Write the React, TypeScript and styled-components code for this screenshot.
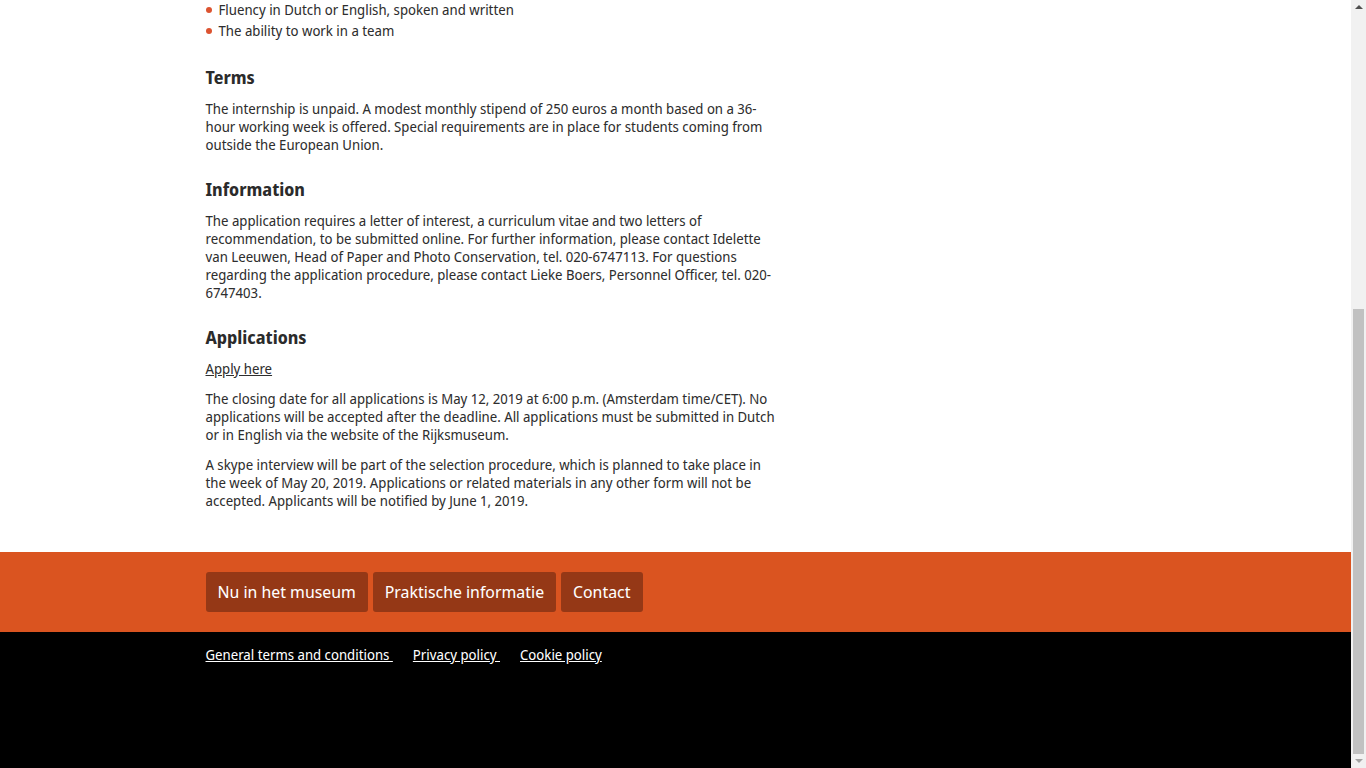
import React from "react";
import styled, { createGlobalStyle } from "styled-components";

const Global = createGlobalStyle`
  html, body { margin: 0; padding: 0; height: 100%; overflow: hidden; }
  body { font-family: "Noto Sans Display", "Noto Sans", sans-serif; color: #2e2e2e; background: #fff; }
  * { box-sizing: border-box; }
`;

const Frame = styled.div`
  display: flex;
  height: 768px;
  width: 1366px;
`;

const Page = styled.div`
  flex: 1;
  display: flex;
  flex-direction: column;
  min-width: 0;
`;

const Container = styled.div`
  width: 940px;
  margin: 0 auto;
`;

const Main = styled.main`
  background: #fff;
  padding-bottom: 30px;
`;

const Column = styled.div`
  width: 575px;
  font-size: 14px;
  line-height: 18px;
`;

const List = styled.ul`
  list-style: none;
  margin: 0;
  padding: 0 0 1px;
`;

const Item = styled.li`
  position: relative;
  padding-left: 13px;
  line-height: 20px;
  & + & {
    margin-top: 1px;
  }
  &::before {
    content: "";
    position: absolute;
    left: 0;
    top: 7px;
    width: 6px;
    height: 6px;
    border-radius: 50%;
    background: #dc5330;
  }
`;

const Heading = styled.h2`
  font-size: 17px;
  font-weight: 700;
  line-height: 24px;
  margin: 24px 0 10px;
  color: #2b2b2b;
`;

const Para = styled.p`
  margin: 0 0 12px;
`;

const TextLink = styled.a`
  color: #2e2e2e;
  text-decoration: underline;
`;

const NavBand = styled.nav`
  background: #da5420;
  padding: 20px 0;
`;

const NavRow = styled.div`
  display: flex;
  gap: 5px;
`;

const NavButton = styled.a`
  display: block;
  background: #953816;
  color: #fff;
  font-size: 16.8px;
  line-height: 40px;
  height: 40px;
  padding: 0 12px;
  border-radius: 3px;
  text-decoration: none;
`;

const Bottom = styled.footer`
  flex: 1;
  background: #000;
  padding-top: 14px;
`;

const LegalRow = styled.div`
  display: flex;
  gap: 20px;
  font-size: 14px;
  line-height: 18px;
`;

const LegalLink = styled.a`
  color: #fff;
  text-decoration: underline;
  white-space: pre;
`;

const Scrollbar = styled.div`
  width: 15px;
  background: #f1f1f1;
  display: flex;
  flex-direction: column;
  align-items: center;
`;

const Arrow = styled.div<{ $down?: boolean }>`
  width: 0;
  height: 0;
  margin: 5px 0;
  border-left: 4px solid transparent;
  border-right: 4px solid transparent;
  ${(p) =>
    p.$down
      ? "border-top: 4px solid #a3a3a3;"
      : "border-bottom: 4px solid #505050;"}
`;

const Track = styled.div`
  flex: 1;
  width: 100%;
  display: flex;
  flex-direction: column;
  justify-content: flex-end;
  padding: 0 2px;
`;

const Thumb = styled.div`
  height: 445px;
  background: #c1c1c1;
`;

export default function App() {
  return (
    <>
      <Global />
      <Frame>
        <Page>
          <Main>
            <Container>
              <Column>
                <List>
                  <Item>Fluency in Dutch or English, spoken and written</Item>
                  <Item>The ability to work in a team</Item>
                </List>
                <Heading>Terms</Heading>
                <Para>
                  The internship is unpaid. A modest monthly stipend of 250 euros a month based on a 36-hour
                  working week is offered. Special requirements are in place for students coming from outside the
                  European Union.
                </Para>
                <Heading>Information</Heading>
                <Para>
                  The application requires a letter of interest, a curriculum vitae and two letters of
                  recommendation, to be submitted online. For further information, please contact Idelette van
                  Leeuwen, Head of Paper and Photo Conservation, tel. 020-6747113. For questions regarding the
                  application procedure, please contact Lieke Boers, Personnel Officer, tel. 020-<wbr />6747403.
                </Para>
                <Heading>Applications</Heading>
                <Para>
                  <TextLink href="#">Apply here</TextLink>
                </Para>
                <Para>
                  The closing date for all applications is May 12, 2019 at 6:00 p.m. (Amsterdam time/CET). No
                  applications will be accepted after the deadline. All applications must be submitted in Dutch or
                  in English via the website of the Rijksmuseum.
                </Para>
                <Para>
                  A skype interview will be part of the selection procedure, which is planned to take place in the
                  week of May 20, 2019. Applications or related materials in any other form will not be accepted.
                  Applicants will be notified by June 1, 2019.
                </Para>
              </Column>
            </Container>
          </Main>
          <NavBand>
            <Container>
              <NavRow>
                <NavButton href="#">Nu in het museum</NavButton>
                <NavButton href="#">Praktische informatie</NavButton>
                <NavButton href="#">Contact</NavButton>
              </NavRow>
            </Container>
          </NavBand>
          <Bottom>
            <Container>
              <LegalRow>
                <LegalLink href="#">{"General terms and conditions "}</LegalLink>
                <LegalLink href="#">{"Privacy policy "}</LegalLink>
                <LegalLink href="#">Cookie policy</LegalLink>
              </LegalRow>
            </Container>
          </Bottom>
        </Page>
        <Scrollbar>
          <Arrow />
          <Track>
            <Thumb />
          </Track>
          <Arrow $down />
        </Scrollbar>
      </Frame>
    </>
  );
}
